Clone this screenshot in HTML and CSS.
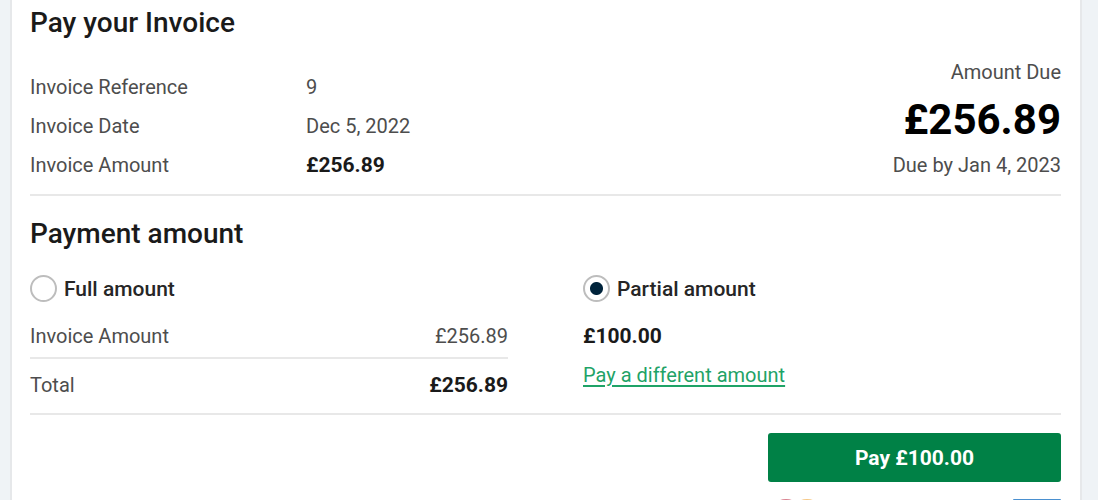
FILE: index.html
```html
<!DOCTYPE html>
<html lang="en">
<head>
  <meta charset="UTF-8" />
  <meta name="viewport" content="width=device-width, initial-scale=1.0" />
  <title>Pay your Invoice</title>
  <link rel="stylesheet" href="styles.css">
</head>
<body>
  <main class="card">
    <!-- Invoice summary -->
    <section class="summary">
      <h1>Pay your Invoice</h1>
      <div class="summary-row">
        <dl class="details">
          <dt>Invoice Reference</dt>
          <dd>9</dd>
          <dt>Invoice Date</dt>
          <dd>Dec 5, 2022</dd>
          <dt>Invoice Amount</dt>
          <dd class="strong">£256.89</dd>
        </dl>
        <div class="due">
          <p>Amount Due</p>
          <p class="due-total">£256.89</p>
          <p>Due by Jan 4, 2023</p>
        </div>
      </div>
    </section>

    <!-- Payment options -->
    <form>
      <section class="payment">
        <h2>Payment amount</h2>
        <div class="options">
          <div class="option">
            <div class="choice">
              <input type="radio" id="full" name="amount" value="full" />
              <label for="full">Full amount</label>
            </div>
            <table class="totals">
              <tr>
                <th scope="row">Invoice Amount</th>
                <td>£256.89</td>
              </tr>
              <tr>
                <th scope="row">Total</th>
                <td class="strong">£256.89</td>
              </tr>
            </table>
          </div>
          <div class="option">
            <div class="choice">
              <input type="radio" id="partial" name="amount" value="partial" checked />
              <label for="partial">Partial amount</label>
            </div>
            <p class="partial-amount strong">£100.00</p>
            <a href="#">Pay a different amount</a>
          </div>
        </div>
      </section>

      <div class="actions">
        <button type="button">Pay £100.00</button>
        <div class="logos">
          <svg width="56" height="34" viewBox="0 0 56 34" aria-hidden="true">
            <circle cx="18" cy="17" r="17" fill="#d9818f" />
            <circle cx="39" cy="17" r="17" fill="#f6c884" />
          </svg>
          <svg width="48" height="34" viewBox="0 0 48 34" aria-hidden="true">
            <rect width="48" height="34" rx="1" fill="#4a90d0" />
          </svg>
        </div>
      </div>
    </form>
  </main>
</body>
</html>
```
FILE: styles.css
```css
/* Global reset and body styling */
* { box-sizing: border-box; margin: 0; padding: 0; }
html { height: 100%; overflow: hidden; }
body { min-height: 100%; padding: 0 16px 0 10px; font-family: Roboto, Arial, sans-serif; font-size: 20px; line-height: 24px; background: #eff3f6; color: #4d4d4d; }

.card { min-height: 100vh; padding: 5px 19px 20px 18px; background: #fff; border: 2px solid #e6e8ea; border-top: none; border-bottom: none; }
h1, h2 { font-size: 28px; font-weight: 500; line-height: 36px; color: #1a1a1a; }
.strong { font-size: 21px; font-weight: bold; color: #1a1a1a; }

/* Invoice summary */
.summary { padding-bottom: 9px; border-bottom: 2px solid #e8e8e8; }
.summary-row { display: flex; justify-content: space-between; padding-top: 19px; }
.details { display: grid; grid-template-columns: 276px auto; align-content: end; line-height: 39px; margin-top: 8px; }
.due { text-align: right; }
.due-total { padding: 12px 0 9px; font-size: 42px; font-weight: bold; line-height: 48px; color: #000; }

/* Payment options */
.payment { padding: 20px 0 9px; border-bottom: 2px solid #e8e8e8; }
.options { display: grid; grid-template-columns: 1fr 1fr; gap: 75px; padding-top: 23px; }
.choice { display: flex; align-items: center; gap: 7px; font-size: 21px; font-weight: 500; color: #262626; }
.choice input { appearance: none; width: 27px; height: 27px; border: 2px solid #bdbdbd; border-radius: 50%; background: #fff; }
.choice input:checked { background: radial-gradient(circle, #00233b 6px, #fff 7px); }
.totals { width: 100%; margin-top: 17px; border-collapse: collapse; }
.totals th { font-weight: normal; text-align: left; }
.totals td { text-align: right; }
.totals tr:first-child > * { padding: 5px 0 9px; border-bottom: 2px solid #e8e8e8; }
.totals tr:last-child > * { padding: 14px 0 7px; }
.partial-amount { padding: 22px 0 15px; }
a { color: #1fa367; text-underline-offset: 3px; }

/* Pay button and card logos */
.actions { width: 293px; margin: 18px 0 0 auto; }
button { width: 100%; height: 49px; border: none; border-radius: 3px; background: #008146; color: #fff; font: bold 21px Roboto, Arial, sans-serif; cursor: pointer; }
button:hover { background: #006738; }
.logos { display: flex; justify-content: space-between; padding-top: 17px; }
```
